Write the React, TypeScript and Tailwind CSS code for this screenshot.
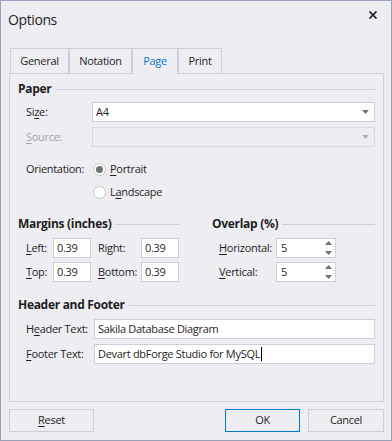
import React from 'react';

const font = { fontFamily: '"Open Sans", "Noto Sans", sans-serif' };

function Key({ children }: { children: React.ReactNode }) {
  return <span className="underline underline-offset-[2px] decoration-1">{children}</span>;
}

function Heading({ title }: { title: string }) {
  return (
    <div className="flex items-center h-[16px]">
      <span className="text-[12px] font-bold text-[#1e1e1e] tracking-[-0.3px] leading-[16px]">{title}</span>
      <div className="ml-[4px] flex-1 h-px bg-[#cccedb]" />
    </div>
  );
}

function Arrow({ color = '#717171' }: { color?: string }) {
  return (
    <svg width="7" height="4" viewBox="0 0 7 4">
      <path d="M0 0h7L3.5 4z" fill={color} />
    </svg>
  );
}

function TextBox({ value, className = '', caret = false }: { value: string; className?: string; caret?: boolean }) {
  return (
    <div className={`h-[20px] border border-[#cccedb] bg-white flex items-center pl-[3px] text-[11px] text-[#1e1e1e] ${className}`}>
      <span>{value}</span>
      {caret && <span className="ml-px w-px h-[14px] bg-black" />}
    </div>
  );
}

function Spin({ value }: { value: string }) {
  return (
    <div className="w-[60px] h-[20px] border border-[#cccedb] bg-white flex items-center pl-[4px] pr-[3px] text-[11px] text-[#1e1e1e]">
      <span className="flex-1">{value}</span>
      <div className="flex flex-col gap-[6px]">
        <svg width="7" height="4" viewBox="0 0 7 4">
          <path d="M0 4h7L3.5 0z" fill="#717171" />
        </svg>
        <Arrow />
      </div>
    </div>
  );
}

function Radio({ checked, label }: { checked: boolean; label: React.ReactNode }) {
  return (
    <div className="flex items-center">
      <div className="w-[13px] h-[13px] rounded-full border border-[#c6c6d0] bg-white flex items-center justify-center">
        {checked && <div className="w-[7px] h-[7px] rounded-full bg-[#717171]" />}
      </div>
      <span className="ml-[4px]">{label}</span>
    </div>
  );
}

export default function App() {
  const tabs = [
    { name: 'General', w: 'w-[59px]' },
    { name: 'Notation', w: 'w-[63px]' },
    { name: 'Page', w: 'w-[46px]' },
    { name: 'Print', w: 'w-[44px]' },
  ];

  return (
    <div
      style={font}
      className="w-[392px] h-[441px] border border-[#9b9fb9] bg-[#eeeef2] flex flex-col text-[11px] text-[#1e1e1e] tracking-[-0.3px] select-none"
    >
      {/* title bar */}
      <div className="h-[47px] flex items-start justify-between pl-[7px] pr-[13px]">
        <span className="mt-[9px] text-[14px] leading-[20px] tracking-[-0.4px] text-[#1e1e1e]">Options</span>
        <svg className="mt-[10px]" width="10" height="8" viewBox="0 0 10 8">
          <path d="M1.5 0.5l7 7M8.5 0.5l-7 7" stroke="#1e1e1e" strokeWidth="1.7" />
        </svg>
      </div>

      {/* tabs */}
      <div className="flex ml-[9px] h-[25px]">
        {tabs.map(t => {
          const active = t.name === 'Page';
          return (
            <div
              key={t.name}
              className={`${t.w} flex items-center justify-center border border-[#cccedb] ${
                active ? 'border-b-0 h-[26px] relative z-10 bg-[#eeeef2] text-[#007acc]' : 'h-[25px] border-b-0'
              }`}
            >
              {t.name}
            </div>
          );
        })}
      </div>

      {/* page panel */}
      <div className="ml-[8px] w-[375px] h-[329px] border border-[#cccedb] px-[8px] pt-[7px]">
        <Heading title="Paper" />

        <div className="mt-[5px] flex items-center pl-[8px]">
          <span className="w-[66px]">Si<Key>z</Key>e:</span>
          <div className="flex-1 h-[20px] border border-[#cccedb] bg-white flex items-center pl-[3px] pr-[5px]">
            <span className="flex-1">A4</span>
            <Arrow />
          </div>
        </div>

        <div className="mt-[5px] flex items-center pl-[8px]">
          <span className="w-[66px] text-[#a2a2a8]"><Key>S</Key>ource:</span>
          <div className="flex-1 h-[20px] border border-[#d6d7e1] flex items-center justify-end pr-[5px]">
            <Arrow color="#b4b4bc" />
          </div>
        </div>

        <div className="mt-[12px] h-[20px] flex items-center pl-[8px]">
          <span className="w-[67px]">Orientation:</span>
          <Radio checked label={<><Key>P</Key>ortrait</>} />
        </div>
        <div className="mt-[3px] h-[20px] flex items-center pl-[75px]">
          <Radio checked={false} label={<>L<Key>a</Key>ndscape</>} />
        </div>

        <div className="mt-[14px] flex gap-[32px]">
          <div className="w-[162px]">
            <Heading title="Margins (inches)" />
            <div className="mt-[6px] flex items-center pl-[8px]">
              <span className="w-[27px]"><Key>L</Key>eft:</span>
              <TextBox value="0.39" className="w-[38px]" />
              <span className="ml-[7px] w-[43px]">Right:</span>
              <TextBox value="0.39" className="w-[38px]" />
            </div>
            <div className="mt-[4px] flex items-center pl-[8px]">
              <span className="w-[27px]"><Key>T</Key>op:</span>
              <TextBox value="0.39" className="w-[38px]" />
              <span className="ml-[7px] w-[43px]"><Key>B</Key>ottom:</span>
              <TextBox value="0.39" className="w-[38px]" />
            </div>
          </div>
          <div className="flex-1">
            <Heading title="Overlap (%)" />
            <div className="mt-[6px] flex items-center pl-[7px]">
              <span className="w-[57px]"><Key>H</Key>orizontal:</span>
              <Spin value="5" />
            </div>
            <div className="mt-[4px] flex items-center pl-[7px]">
              <span className="w-[57px]"><Key>V</Key>ertical:</span>
              <Spin value="5" />
            </div>
          </div>
        </div>

        <div className="mt-[15px]">
          <Heading title="Header and Footer" />
        </div>
        <div className="mt-[6px] flex items-center pl-[8px]">
          <span className="w-[68px]">H<Key>e</Key>ader Text:</span>
          <TextBox value="Sakila Database Diagram" className="flex-1" />
        </div>
        <div className="mt-[5px] flex items-center pl-[8px]">
          <span className="w-[68px]"><Key>F</Key>ooter Text:</span>
          <TextBox value="Devart dbForge Studio for MySQL" className="flex-1" caret />
        </div>
      </div>

      {/* buttons */}
      <div className="mt-[7px] flex ml-[8px] mr-[7px]">
        <button className="w-[85px] h-[23px] border border-[#cccedb] bg-[#eeeef2] text-[#1e1e1e]">
          <Key>R</Key>eset
        </button>
        <div className="flex-1" />
        <button className="w-[75px] h-[23px] border border-[#007acc] bg-[#eeeef2] text-[#1e1e1e]">OK</button>
        <button className="ml-[8px] w-[76px] h-[23px] border border-[#cccedb] bg-[#eeeef2] text-[#1e1e1e]">Cancel</button>
      </div>
    </div>
  );
}
